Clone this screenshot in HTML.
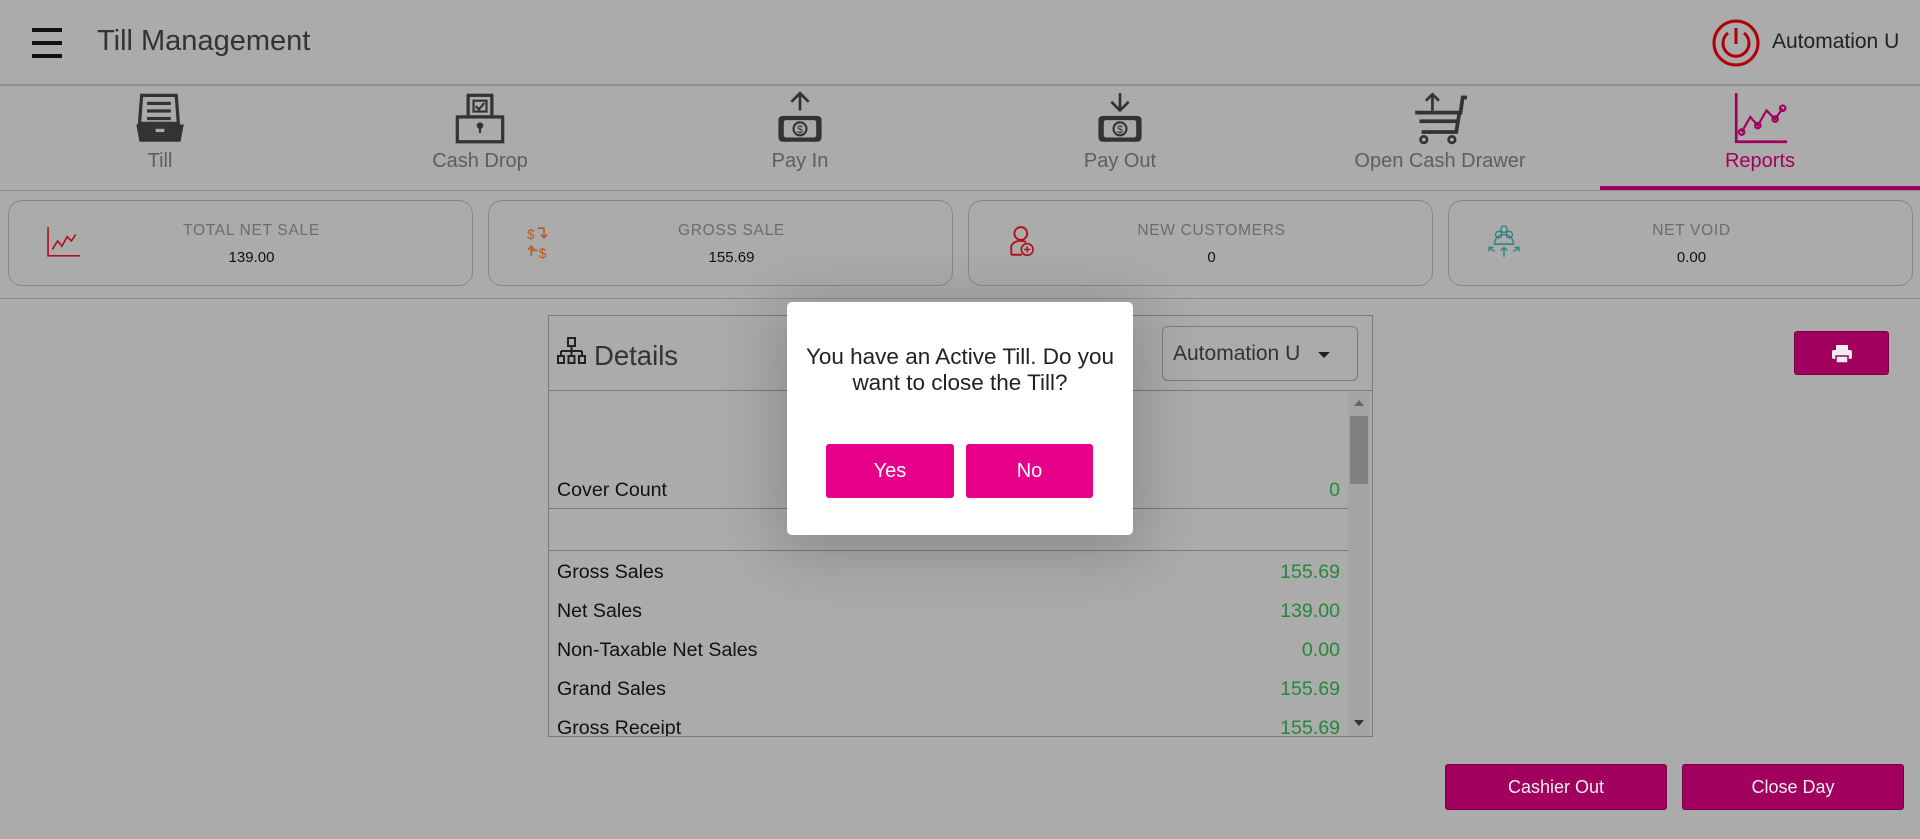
<!DOCTYPE html>
<html><head><meta charset="utf-8"><style>
*{box-sizing:border-box;margin:0;padding:0}
body{width:1920px;height:839px;background:#ababab;font-family:"Liberation Sans",sans-serif;position:relative;overflow:hidden;color:#222}
.abs{position:absolute}
.hline{position:absolute;left:0;width:1920px;height:2px;background:#8e8e8e}
.tab{position:absolute;top:84px;width:320px;height:106px;text-align:center}
.tab .lbl{position:absolute;top:66px;left:0;width:100%;font-size:20px;color:#5e5e5e}
.tab svg{position:absolute;left:133px;top:7px}
.card{position:absolute;top:200px;width:465px;height:86px;border:1px solid #888;border-radius:14px}
.card .t{position:absolute;top:21px;left:0;width:100%;padding-left:22px;text-align:center;font-size:15.5px;color:#6c6c6c;letter-spacing:.7px}
.card .v{position:absolute;top:48px;left:0;width:100%;padding-left:22px;text-align:center;font-size:15px;color:#111}
.card svg{position:absolute;left:38px;top:24px}
.row{position:absolute;left:557px;width:783px;font-size:19.6px;color:#111}
.row span{position:absolute;right:0;color:#23883c}
.btn{position:absolute;background:#a2005e;color:#eee;font-size:18px;text-align:center;border-radius:3px;border:1px solid #7a0046}
</style></head><body>
<div class="abs" style="left:32px;top:28px;width:30px;height:4px;background:#111"></div>
<div class="abs" style="left:32px;top:41px;width:30px;height:4px;background:#111"></div>
<div class="abs" style="left:32px;top:54px;width:30px;height:4px;background:#111"></div>
<div class="abs" style="left:97px;top:25px;font-size:29px;color:#333">Till Management</div>
<svg class="abs" style="left:1711px;top:18px" width="50" height="50" viewBox="0 0 50 50"><circle cx="25" cy="25" r="22" fill="none" stroke="#b0000a" stroke-width="3"/><path d="M17 15 A13 13 0 1 0 33 15" fill="none" stroke="#b0000a" stroke-width="3"/><line x1="25" y1="10" x2="25" y2="26" stroke="#b0000a" stroke-width="3"/></svg>
<div class="abs" style="left:1772px;top:30px;font-size:21px;color:#222">Automation U</div>
<div class="hline" style="top:84px"></div>

<div class="tab" style="left:0"><svg width="54" height="54" viewBox="0 0 50 50"><path d="M8 4h32l2 26H6z" fill="none" stroke="#333" stroke-width="3"/><rect x="13" y="10" width="22" height="3" fill="#333"/><rect x="13" y="17" width="22" height="3" fill="#333"/><rect x="13" y="24" width="22" height="3" fill="#333"/><path d="M3 31h44l-3 16H6z" fill="#333"/><rect x="21" y="35" width="8" height="3" fill="#aaa"/></svg><div class="lbl">Till</div></div>
<div class="tab" style="left:320px"><svg width="54" height="54" viewBox="0 0 50 50"><rect x="14" y="4" width="22" height="20" fill="none" stroke="#333" stroke-width="3"/><rect x="19" y="9" width="12" height="10" fill="none" stroke="#333" stroke-width="2"/><path d="M21 14l3 3 5-6" fill="none" stroke="#333" stroke-width="2"/><rect x="4" y="24" width="42" height="23" fill="none" stroke="#333" stroke-width="3"/><circle cx="25" cy="32" r="3" fill="#333"/><rect x="24" y="33" width="2" height="6" fill="#333"/></svg><div class="lbl">Cash Drop</div></div>
<div class="tab" style="left:640px"><svg width="54" height="54" viewBox="0 0 50 50"><path d="M25 18V2M17 10l8-8 8 8" fill="none" stroke="#333" stroke-width="2.5"/><rect x="5" y="23" width="40" height="24" rx="4" fill="#333"/><rect x="10" y="27" width="30" height="16" rx="2" fill="#aaa"/><circle cx="25" cy="35" r="6" fill="none" stroke="#333" stroke-width="2"/><text x="25" y="39" font-size="10" text-anchor="middle" fill="#333" font-family="Liberation Sans">$</text></svg><div class="lbl">Pay In</div></div>
<div class="tab" style="left:960px"><svg width="54" height="54" viewBox="0 0 50 50"><path d="M25 2v16M17 10l8 8 8-8" fill="none" stroke="#333" stroke-width="2.5"/><rect x="5" y="23" width="40" height="24" rx="4" fill="#333"/><rect x="10" y="27" width="30" height="16" rx="2" fill="#aaa"/><circle cx="25" cy="35" r="6" fill="none" stroke="#333" stroke-width="2"/><text x="25" y="39" font-size="10" text-anchor="middle" fill="#333" font-family="Liberation Sans">$</text></svg><div class="lbl">Pay Out</div></div>
<div class="tab" style="left:1280px"><svg width="54" height="54" viewBox="0 0 50 50"><path d="M18 18V3M12 9l6-6 6 6" fill="none" stroke="#333" stroke-width="2.5"/><path d="M2 20h42l2-14h4" fill="none" stroke="#333" stroke-width="3.5"/><path d="M6 28h36M8 38h32l3-18" fill="none" stroke="#333" stroke-width="3.5"/><circle cx="10" cy="45" r="3" fill="none" stroke="#333" stroke-width="2.5"/><circle cx="36" cy="45" r="3" fill="none" stroke="#333" stroke-width="2.5"/></svg><div class="lbl">Open Cash Drawer</div></div>
<div class="tab" style="left:1600px"><svg width="54" height="54" viewBox="0 0 50 50"><path d="M3 2v45h48" fill="none" stroke="#a2005e" stroke-width="2.5"/><path d="M8 38l8-14 7 8 8-14 8 8 7-10" fill="none" stroke="#a2005e" stroke-width="2"/><circle cx="8" cy="38" r="2.5" fill="none" stroke="#a2005e" stroke-width="2"/><circle cx="23" cy="32" r="2.5" fill="none" stroke="#a2005e" stroke-width="2"/><circle cx="39" cy="26" r="2.5" fill="none" stroke="#a2005e" stroke-width="2"/><circle cx="46" cy="16" r="2.5" fill="none" stroke="#a2005e" stroke-width="2"/></svg><div class="lbl" style="color:#a2005e">Reports</div></div>
<div class="abs" style="left:1600px;top:186px;width:320px;height:4px;background:#a2005e"></div>
<div class="hline" style="top:190px;height:1px"></div>

<div class="card" style="left:8px"><svg width="34" height="34" viewBox="0 0 32 30"><path d="M1 1v27h30" fill="none" stroke="#b0101a" stroke-width="1.5"/><path d="M5 22l5-8 4 5 5-9 4 4 4-6" fill="none" stroke="#b0101a" stroke-width="1.5"/></svg><div class="t">TOTAL NET SALE</div><div class="v">139.00</div></div>
<div class="card" style="left:488px"><svg width="34" height="34" viewBox="0 0 32 32"><text x="0" y="13" font-size="13" fill="#b85a20" font-family="Liberation Sans">$</text><path d="M10 3h6v9M13 9l3 3 3-3" fill="none" stroke="#b85a20" stroke-width="1.5"/><path d="M4 29v-9M1 23l3-3 3 3M4 24h6" fill="none" stroke="#b85a20" stroke-width="1.5"/><text x="11" y="31" font-size="13" fill="#b85a20" font-family="Liberation Sans">$</text></svg><div class="t">GROSS SALE</div><div class="v">155.69</div></div>
<div class="card" style="left:968px"><svg width="34" height="34" viewBox="0 0 32 32"><circle cx="13" cy="8" r="6" fill="none" stroke="#b0101a" stroke-width="1.8"/><path d="M4 28v-8a9 6 0 0 1 14-4" fill="none" stroke="#b0101a" stroke-width="1.8"/><path d="M4 28h10" stroke="#b0101a" stroke-width="1.8"/><circle cx="19" cy="23" r="5.5" fill="none" stroke="#b0101a" stroke-width="1.5"/><path d="M19 20v6M16 23h6" stroke="#b0101a" stroke-width="1.3"/></svg><div class="t">NEW CUSTOMERS</div><div class="v">0</div></div>
<div class="card" style="left:1448px"><svg width="34" height="34" viewBox="0 0 32 32"><circle cx="16" cy="4" r="3" fill="none" stroke="#2f8080" stroke-width="1.3"/><circle cx="11" cy="9" r="3" fill="none" stroke="#2f8080" stroke-width="1.3"/><circle cx="21" cy="9" r="3" fill="none" stroke="#2f8080" stroke-width="1.3"/><path d="M7 18a5 5 0 0 1 18 0z" fill="none" stroke="#2f8080" stroke-width="1.3"/><path d="M16 30v-9M13 24l3-3 3 3M2 21l5 4M2 25v-4h4M30 21l-5 4M30 25v-4h-4" fill="none" stroke="#2f8080" stroke-width="1.3"/></svg><div class="t">NET VOID</div><div class="v">0.00</div></div>
<div class="hline" style="top:298px;height:1px"></div>

<div class="abs" style="left:548px;top:315px;width:825px;height:422px;border:1px solid #7a7a7a"></div>
<div class="abs" style="left:548px;top:390px;width:825px;height:1px;background:#7a7a7a"></div>
<svg class="abs" style="left:557px;top:337px" width="30" height="28" viewBox="0 0 30 28"><rect x="11" y="1" width="7" height="8" fill="none" stroke="#222" stroke-width="2"/><path d="M14.5 9v5M4 14h21M4 14v5M14.5 14v5M25 14v5" stroke="#222" stroke-width="2" fill="none"/><rect x="1" y="19" width="6" height="7" fill="none" stroke="#222" stroke-width="2"/><rect x="11.5" y="19" width="6" height="7" fill="none" stroke="#222" stroke-width="2"/><rect x="22" y="19" width="6" height="7" fill="none" stroke="#222" stroke-width="2"/></svg>
<div class="abs" style="left:594px;top:340px;font-size:27.5px;color:#333">Details</div>
<div class="abs" style="left:1162px;top:326px;width:196px;height:55px;border:1px solid #7a7a7a;border-radius:6px;font-size:21px;color:#333;padding:15px 0 0 10px">Automation U</div>
<div class="abs" style="left:1318px;top:352px;width:0;height:0;border-left:6px solid transparent;border-right:6px solid transparent;border-top:6px solid #222"></div>
<div class="abs" style="left:1348px;top:392px;width:22px;height:344px;background:#a4a4a4"></div>
<div class="abs" style="left:1350px;top:416px;width:18px;height:68px;background:#808080"></div>
<div class="abs" style="left:1354px;top:400px;width:0;height:0;border-left:5px solid transparent;border-right:5px solid transparent;border-bottom:6px solid #666"></div>
<div class="abs" style="left:1354px;top:720px;width:0;height:0;border-left:5px solid transparent;border-right:5px solid transparent;border-top:6px solid #333"></div>
<div class="row" style="top:479px">Cover Count<span>0</span></div>
<div class="abs" style="left:548px;top:508px;width:800px;height:1px;background:#7a7a7a"></div>
<div class="abs" style="left:548px;top:550px;width:800px;height:1px;background:#7a7a7a"></div>
<div class="row" style="top:561px">Gross Sales<span>155.69</span></div>
<div class="row" style="top:600px">Net Sales<span>139.00</span></div>
<div class="row" style="top:639px">Non-Taxable Net Sales<span>0.00</span></div>
<div class="row" style="top:678px">Grand Sales<span>155.69</span></div>
<div class="row" style="top:717px;height:19px;overflow:hidden">Gross Receipt<span>155.69</span></div>

<div class="btn" style="left:1794px;top:331px;width:95px;height:44px"><svg style="margin-top:12px" width="22" height="20" viewBox="0 0 22 20"><rect x="5" y="1" width="12" height="5" fill="#eee"/><rect x="1" y="6" width="20" height="9" rx="2" fill="#eee"/><rect x="5" y="12" width="12" height="7" fill="#eee" stroke="#a2005e" stroke-width="1.5"/></svg></div>
<div class="btn" style="left:1445px;top:764px;width:222px;height:46px;line-height:44px">Cashier Out</div>
<div class="btn" style="left:1682px;top:764px;width:222px;height:46px;line-height:44px">Close Day</div>

<div class="abs" style="left:787px;top:302px;width:346px;height:233px;background:#fff;border-radius:5px;box-shadow:0 10px 60px 10px rgba(0,0,0,.18)"></div>
<div class="abs" style="left:787px;top:344px;width:346px;text-align:center;font-size:22.5px;line-height:26px;color:#222">You have an Active Till. Do you<br>want to close the Till?</div>
<div class="abs" style="left:826px;top:444px;width:128px;height:54px;background:#e6008a;border-radius:3px;color:#fff;font-size:20px;text-align:center;line-height:54px">Yes</div>
<div class="abs" style="left:966px;top:444px;width:127px;height:54px;background:#e6008a;border-radius:3px;color:#fff;font-size:20px;text-align:center;line-height:54px">No</div>
</body></html>
